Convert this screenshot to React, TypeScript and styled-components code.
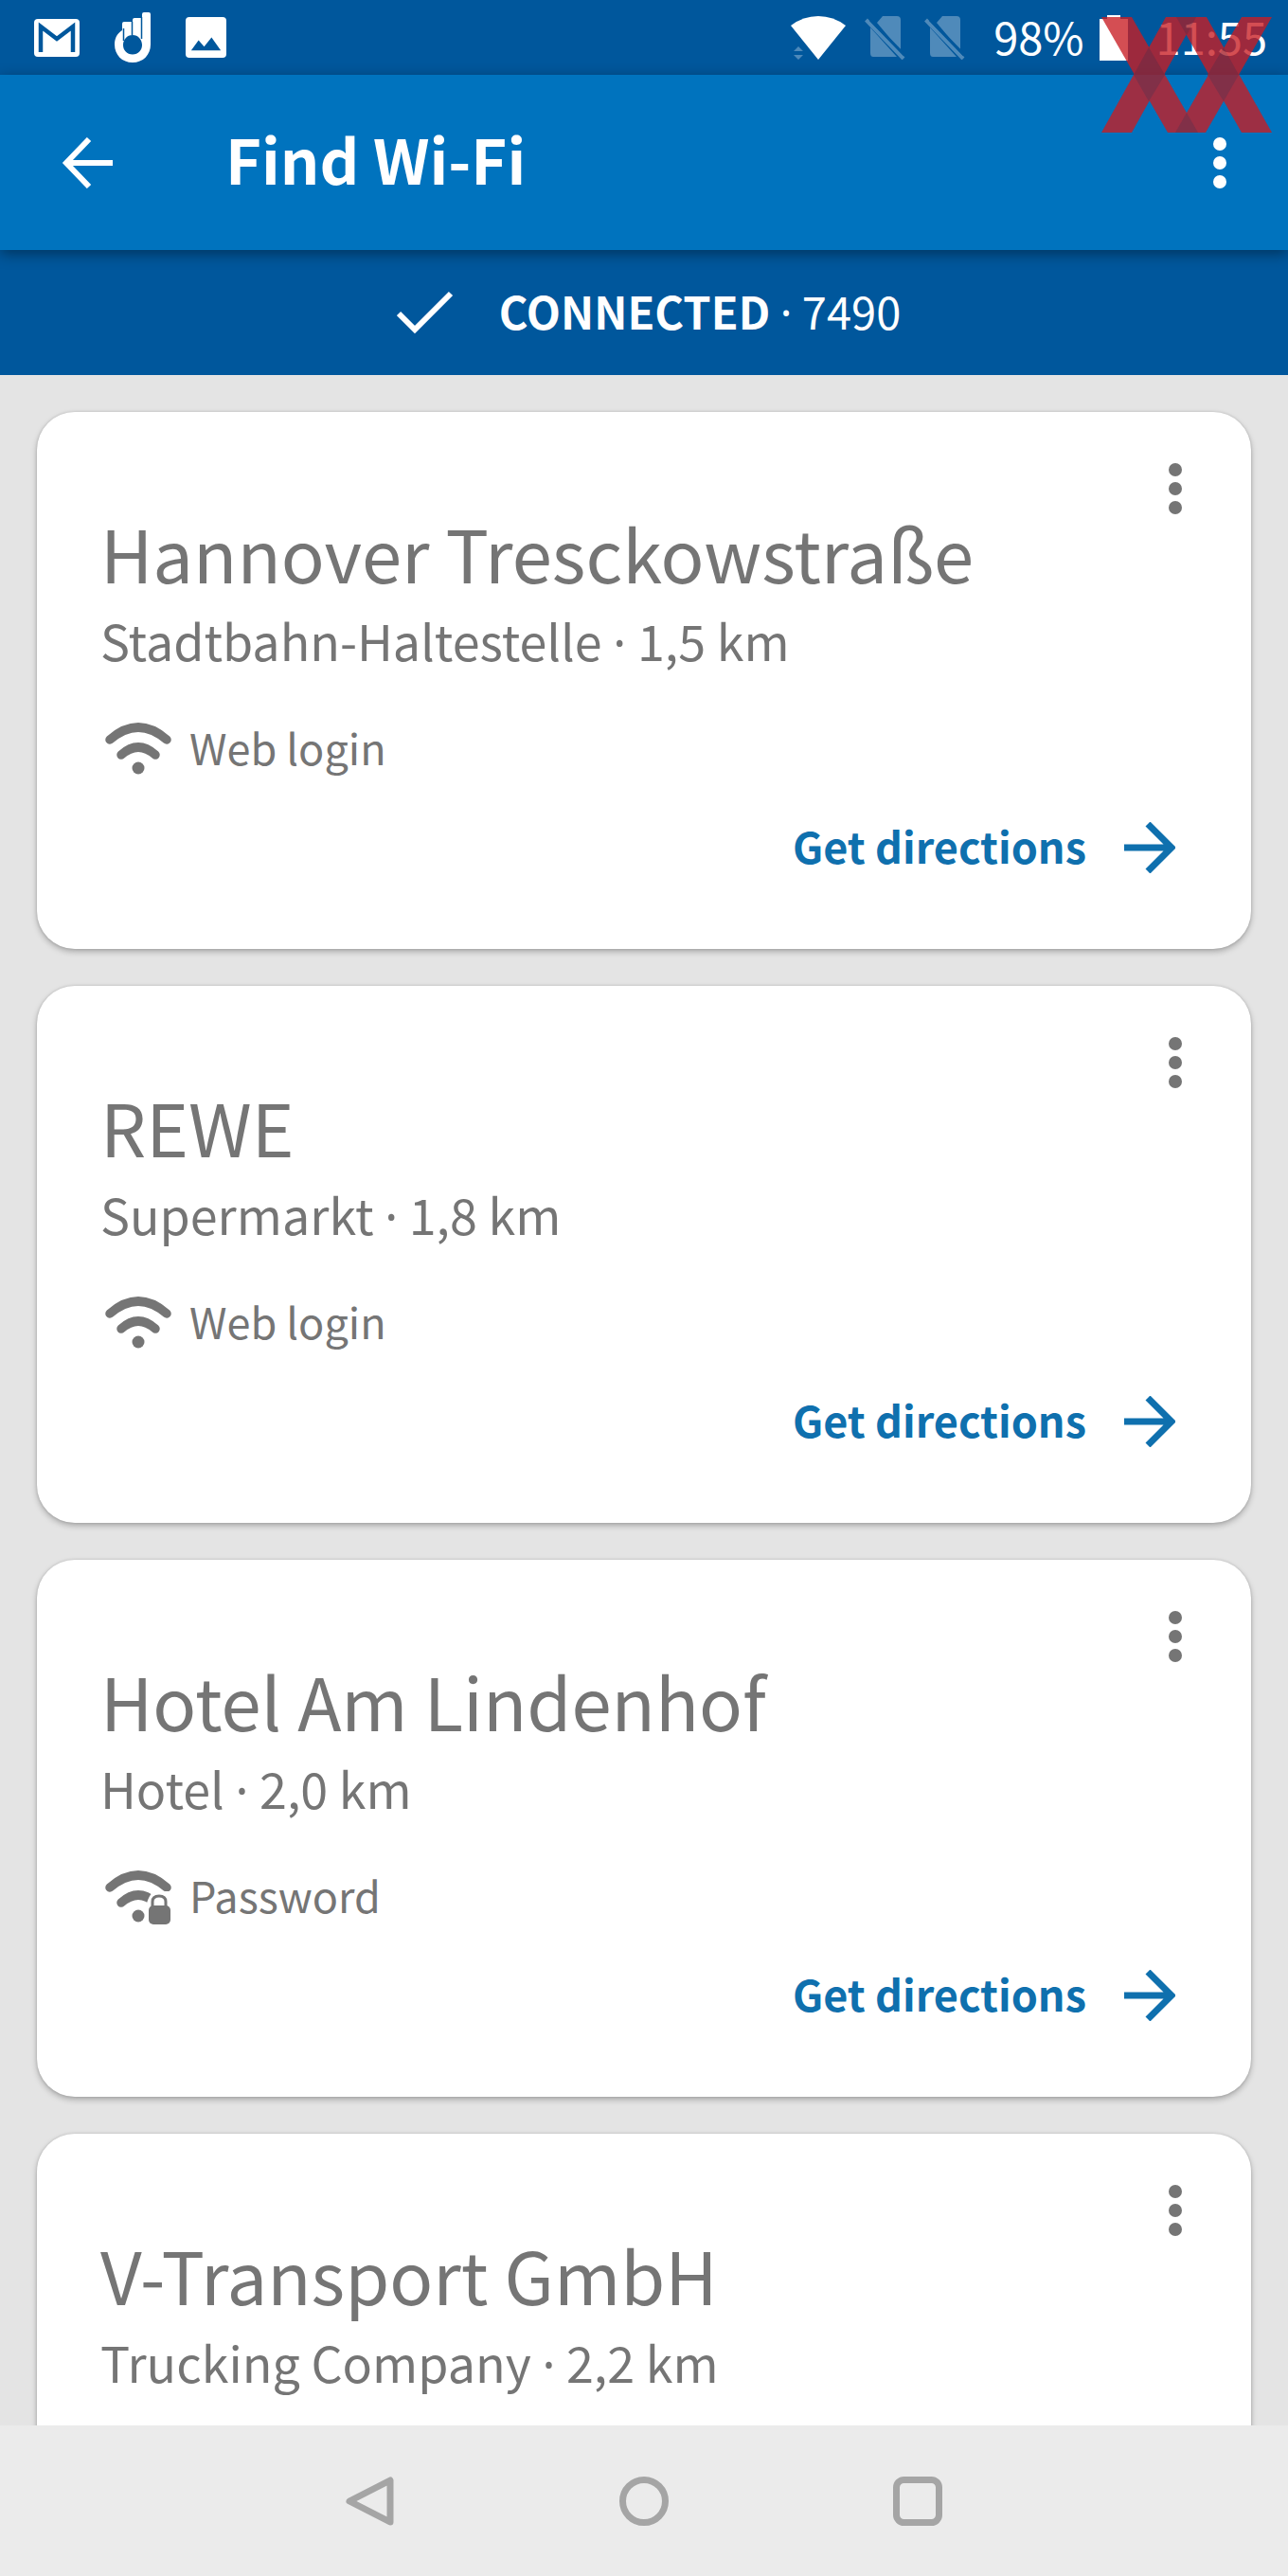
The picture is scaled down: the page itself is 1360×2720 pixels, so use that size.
import React from 'react';
import styled, { createGlobalStyle } from 'styled-components';

const GlobalStyle = createGlobalStyle`
  *, *::before, *::after { box-sizing: border-box; }
  body {
    margin: 0;
    background: #e4e4e4;
    font-family: 'Noto Sans CJK SC', 'Noto Sans', sans-serif;
  }
  h1, h2, p, ul { margin: 0; padding: 0; }
  button { border: 0; background: none; padding: 0; font: inherit; color: inherit; cursor: pointer; }
  svg { display: block; flex: none; }
`;

const Screen = styled.div`
  position: relative;
  display: flex;
  flex-direction: column;
  height: 100vh;
  overflow: hidden;
`;

const StatusBar = styled.div`
  flex: none;
  display: flex;
  align-items: center;
  justify-content: space-between;
  height: 79px;
  padding: 0 22px 0 36px;
  background: #00579c;
  color: #fff;
  font-size: 47px;
`;

const StatusGroup = styled.div<{ $gap: number }>`
  display: flex;
  align-items: center;
  gap: ${(p) => p.$gap}px;
`;

const Label = styled.span`
  padding-bottom: 4px;
  line-height: 56px;
`;

const Dot = styled.span`
  font-family: 'Noto Sans', sans-serif;
  line-height: 1;
`;

const AppBar = styled.header`
  flex: none;
  position: relative;
  z-index: 1;
  display: flex;
  align-items: center;
  height: 185px;
  padding: 0 36px 0 56px;
  background: #0073be;
  color: #fff;
  box-shadow: 0 4px 14px rgba(0, 0, 0, 0.4);
`;

const Title = styled.h1`
  flex: 1;
  padding: 0 0 10px 110px;
  font-size: 65px;
  font-weight: 700;
  line-height: 80px;
`;

const IconButton = styled.button`
  display: grid;
  place-items: center;
  width: 72px;
  height: 72px;
`;

const Banner = styled.div`
  flex: none;
  display: flex;
  align-items: center;
  justify-content: center;
  gap: 48px;
  height: 132px;
  padding-left: 10px;
  background: #00579c;
  color: #fff;
  font-size: 47px;
`;

const CardList = styled.ul`
  flex: 1;
  min-height: 0;
  display: flex;
  flex-direction: column;
  gap: 39px;
  padding: 39px;
  overflow: hidden;
  list-style: none;
`;

const Card = styled.li`
  flex: none;
  position: relative;
  display: flex;
  flex-direction: column;
  min-height: 567px;
  padding: 102px 68px 77px 67px;
  border-radius: 40px;
  background: #fff;
  color: #757575;
  box-shadow: 0 3px 6px rgba(0, 0, 0, 0.26), 0 0 3px rgba(0, 0, 0, 0.14);
`;

const CardMenu = styled(IconButton)`
  position: absolute;
  top: 45px;
  right: 44px;
`;

const Name = styled.h2`
  font-size: 76px;
  font-weight: 400;
  line-height: 92px;
`;

const Place = styled.p`
  font-size: 52px;
  line-height: 94px;
`;

const Access = styled.p`
  display: flex;
  align-items: center;
  gap: 19px;
  margin-top: 38px;
  padding-left: 5px;
  font-size: 45px;
`;

const Directions = styled.button`
  display: flex;
  align-items: center;
  align-self: flex-end;
  gap: 40px;
  margin-top: 44px;
  padding-right: 12px;
  color: #0f70ae;
  font-size: 45px;
  font-weight: 700;
`;

const NavBar = styled.nav`
  flex: none;
  display: flex;
  align-items: center;
  justify-content: center;
  gap: 217px;
  height: 159px;
  background: #ebebeb;
  color: #a5a5a5;
`;

const Watermark = styled.svg`
  position: absolute;
  z-index: 2;
  top: 18px;
  right: 17px;
`;

const MailIcon = () => (
  <svg width="48" height="40" viewBox="0 0 48 40">
    <rect width="48" height="40" rx="4" fill="#fff" />
    <path d="M7 35V8L24 21L41 8V35" fill="none" stroke="#00579c" strokeWidth="4.5" />
  </svg>
);

const HandIcon = () => (
  <svg width="40" height="54" viewBox="0 0 40 54">
    <path
      fill="#fff"
      fillRule="evenodd"
      d="M32 0h5q2 0 2 2v32c0 11-8 19-19 19S1 45 1 34c0-7 3-12 8-15v-7q0-2 2-2h9V8q0-2 2-2h8V2q0-2 2-2ZM20 24c-6 0-10 5-10 10.500s4 10 10 10 10-4.500 10-10S26 24 20 24Z"
    />
    <path d="M10.500 17v13M19.500 10v14M29.500 5v23" stroke="#00579c" strokeWidth="1.500" />
  </svg>
);

const ImageIcon = () => (
  <svg width="43" height="43" viewBox="0 0 44 44">
    <rect width="44" height="44" rx="4" fill="#fff" />
    <path d="M6 36L14 25L20 32L28 22L38 36Z" fill="#00579c" />
  </svg>
);

const SignalIcon = () => (
  <svg width="58" height="46" viewBox="0 0 58 46">
    <path d="M0 10Q13 0 29 0T58 10L29 46Z" fill="#fff" />
    <path d="M3 37l5-5 5 5ZM3 41h10l-5 5Z" fill="#4d89ba" />
  </svg>
);

const NoSimIcon = () => (
  <svg width="43" height="46" viewBox="0 0 43 46" fill="#4f8aba">
    <path d="M19 0H34Q38 0 38 4V37L13 7Z" />
    <path d="M6 12L34 43H9Q6 43 6 39Z" />
    <path d="M1.500 4L41 45" stroke="#4f8aba" strokeWidth="4" />
    <path d="M6 4L42 41" stroke="#00579c" strokeWidth="3" />
  </svg>
);

const BatteryIcon = () => (
  <svg width="30" height="48" viewBox="0 0 30 48" fill="#fff">
    <path d="M8 0H22V4H30V48H0V4H8Z" />
  </svg>
);

const BackIcon = () => (
  <svg width="54" height="54" viewBox="0 0 54 54" fill="none" stroke="currentColor" strokeWidth="6">
    <path d="M54 27H6M29 2L5 27L29 52" />
  </svg>
);

const ForwardIcon = () => (
  <svg width="54" height="54" viewBox="0 0 54 54" fill="none" stroke="currentColor" strokeWidth="7">
    <path d="M0 27H49M25 2L50 27L25 52" />
  </svg>
);

const CheckIcon = () => (
  <svg width="60" height="46" viewBox="0 0 60 46" fill="none" stroke="currentColor" strokeWidth="6">
    <path d="M2 24L19 41L57 3" />
  </svg>
);

const MoreIcon = () => (
  <svg width="16" height="56" viewBox="0 0 16 56" fill="currentColor">
    <circle cx="8" cy="8" r="7" />
    <circle cx="8" cy="28" r="7" />
    <circle cx="8" cy="48" r="7" />
  </svg>
);

const WifiIcon = ({ locked }: { locked?: boolean }) => (
  <svg width="70" height="60" viewBox="0 0 70 60" fill="none" stroke="currentColor">
    <path d="M5 20Q35 -6 65 20" strokeWidth="9.500" strokeLinecap="round" />
    <path d="M17 36Q35 20 53 36" strokeWidth="9.500" strokeLinecap="round" />
    <circle cx="35" cy="50" r="6.500" fill="currentColor" stroke="none" />
    {locked && (
      <>
        <path d="M43 60V40Q47 24 54 24H70V60Z" fill="#fff" stroke="none" />
        <path d="M50 40V35Q50 29 57 29T64 35V40" strokeWidth="3" />
        <rect x="46" y="39" width="23" height="20" rx="5" fill="currentColor" stroke="none" />
      </>
    )}
  </svg>
);

const XXLogo = () => (
  <Watermark width="180" height="122" viewBox="0 0 180 122" aria-hidden="true">
    <g opacity="0.78">
      <g fill="#c91d23">
        <path d="M0 0H32L102 122H70Z" />
        <path d="M68 0H100L32 122H0Z" />
        <path d="M79 0H111L180 122H148Z" />
        <path d="M148 0H180L110 122H78Z" />
      </g>
      <g fill="#a61e28">
        <path d="M50 32L67 61L50 89L34 61Z" />
        <path d="M129 32L145 61L129 89L112 61Z" />
        <path d="M79 0H100L90 19Z" />
        <path d="M78 122L90 101L102 122Z" />
      </g>
    </g>
  </Watermark>
);

type Hotspot = { name: string; kind: string; distance: string; access?: 'Web login' | 'Password' };

const hotspots: Hotspot[] = [
  { name: 'Hannover Tresckowstraße', kind: 'Stadtbahn-Haltestelle', distance: '1,5 km', access: 'Web login' },
  { name: 'REWE', kind: 'Supermarkt', distance: '1,8 km', access: 'Web login' },
  { name: 'Hotel Am Lindenhof', kind: 'Hotel', distance: '2,0 km', access: 'Password' },
  { name: 'V-Transport GmbH', kind: 'Trucking Company', distance: '2,2 km' },
];

const HotspotCard = ({ name, kind, distance, access }: Hotspot) => (
  <Card>
    <CardMenu aria-label={`Options for ${name}`}>
      <MoreIcon />
    </CardMenu>
    <Name>{name}</Name>
    <Place>
      {kind} <Dot>·</Dot> {distance}
    </Place>
    {access && (
      <>
        <Access>
          <WifiIcon locked={access === 'Password'} />
          <Label>{access}</Label>
        </Access>
        <Directions>
          <Label>Get directions</Label>
          <ForwardIcon />
        </Directions>
      </>
    )}
  </Card>
);

export default function App() {
  return (
    <>
      <GlobalStyle />
      <Screen>
        <StatusBar>
          <StatusGroup $gap={36}>
            <MailIcon />
            <HandIcon />
            <ImageIcon />
          </StatusGroup>
          <StatusGroup $gap={30}>
            <StatusGroup $gap={20}>
              <SignalIcon />
              <NoSimIcon />
              <NoSimIcon />
            </StatusGroup>
            <StatusGroup $gap={16}>
              <Label>98%</Label>
              <BatteryIcon />
            </StatusGroup>
            <Label>11:55</Label>
          </StatusGroup>
        </StatusBar>
        <AppBar>
          <IconButton aria-label="Back">
            <BackIcon />
          </IconButton>
          <Title>Find Wi-Fi</Title>
          <IconButton aria-label="More options">
            <MoreIcon />
          </IconButton>
        </AppBar>
        <Banner>
          <CheckIcon />
          <Label>
            <strong>CONNECTED</strong> <Dot>·</Dot> 7490
          </Label>
        </Banner>
        <CardList>
          {hotspots.map((h) => (
            <HotspotCard key={h.name} {...h} />
          ))}
        </CardList>
        <NavBar>
          <IconButton aria-label="Back">
            <svg width="54" height="54" viewBox="0 0 54 54" fill="none" stroke="currentColor" strokeWidth="7" strokeLinejoin="round">
              <path d="M5 27L48 5V49Z" />
            </svg>
          </IconButton>
          <IconButton aria-label="Home">
            <svg width="54" height="54" viewBox="0 0 54 54" fill="none" stroke="currentColor" strokeWidth="7">
              <circle cx="27" cy="27" r="22.500" />
            </svg>
          </IconButton>
          <IconButton aria-label="Recent apps">
            <svg width="54" height="54" viewBox="0 0 54 54" fill="none" stroke="currentColor" strokeWidth="7">
              <rect x="4.500" y="4.500" width="45" height="45" rx="8" />
            </svg>
          </IconButton>
        </NavBar>
        <XXLogo />
      </Screen>
    </>
  );
}
